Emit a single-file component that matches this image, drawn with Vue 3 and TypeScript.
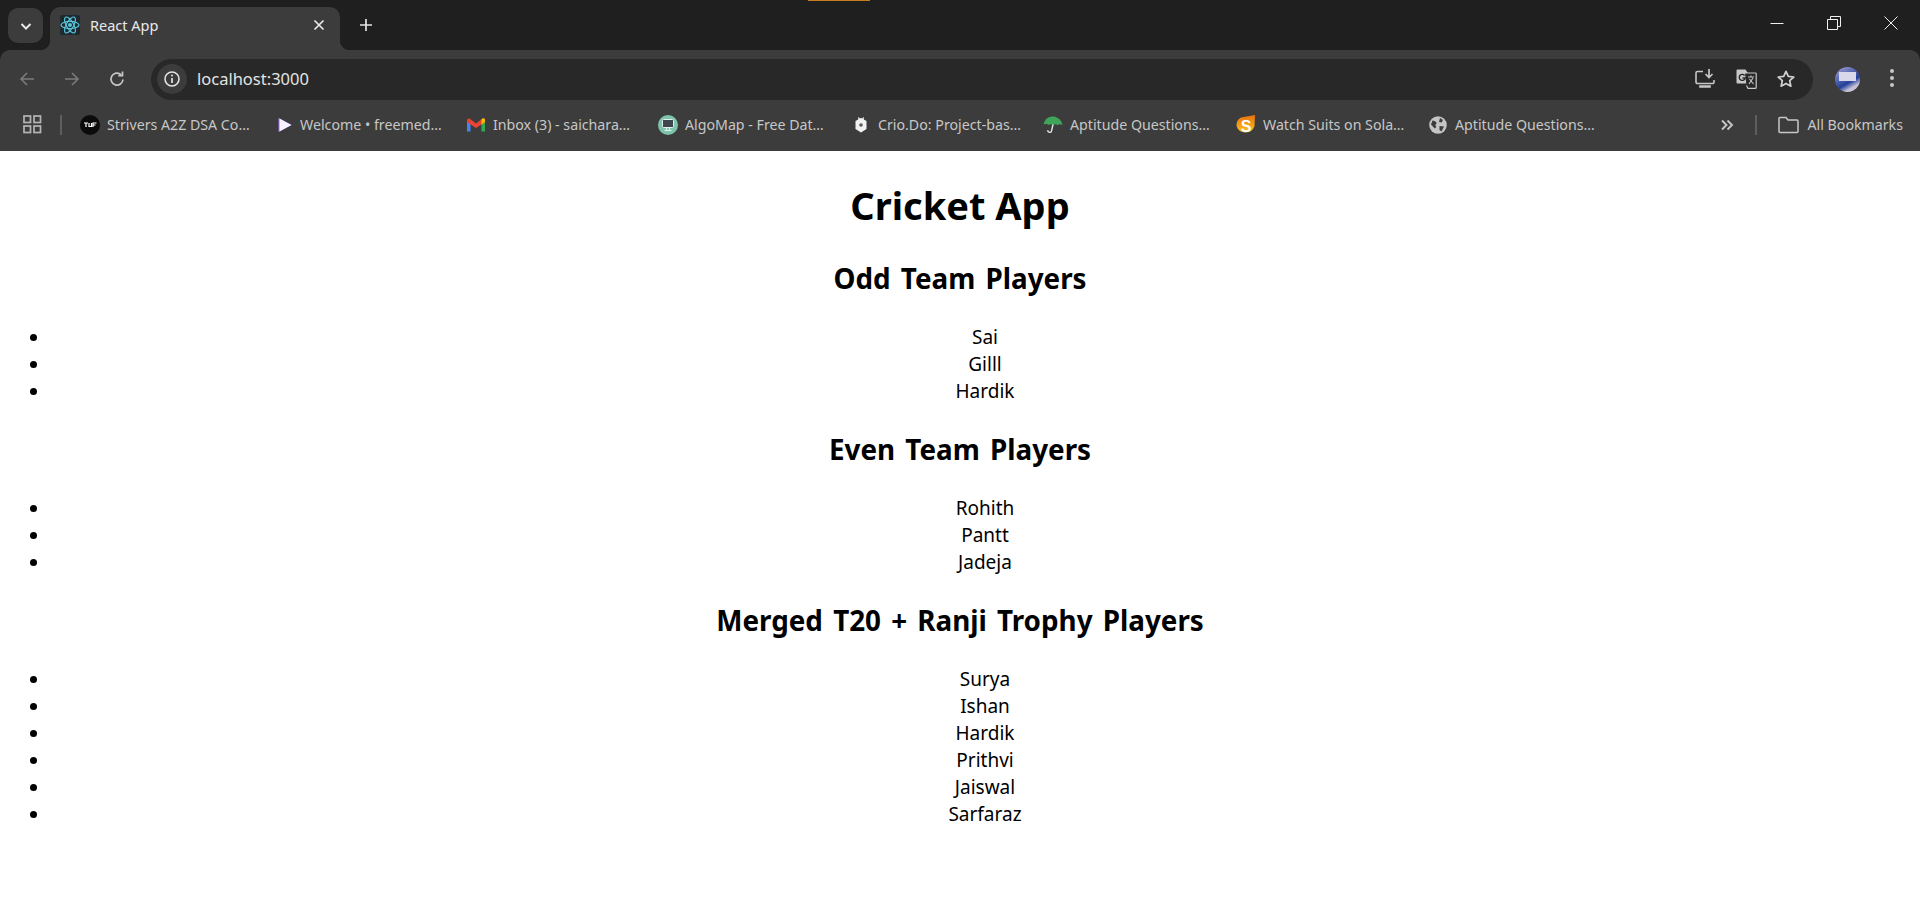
<template>
  <div class="browser">
    <div class="tabstrip">
      <div class="stripe" />
      <button class="tab-search">
        <svg width="14" height="14" viewBox="0 0 14 14"><path d="M2.5 5l4.5 4.5L11.500 5" fill="none" stroke="#e8e8e8" stroke-width="2" /></svg>
      </button>
      <div class="tab">
        <svg class="favicon" width="20" height="20" viewBox="0 0 20 20">
          <rect width="20" height="20" rx="2" fill="#1d2a30" />
          <g fill="none" stroke="#58c4dc" stroke-width="1.200">
            <ellipse cx="10" cy="10" rx="9" ry="3.600" />
            <ellipse cx="10" cy="10" rx="9" ry="3.600" transform="rotate(60 10 10)" />
            <ellipse cx="10" cy="10" rx="9" ry="3.600" transform="rotate(120 10 10)" />
          </g>
          <circle cx="10" cy="10" r="2" fill="#58c4dc" />
        </svg>
        <span class="tab-title">React App</span>
        <svg class="tab-close" width="12" height="12" viewBox="0 0 12 12"><path d="M1.500 1.500l9 9M10.500 1.500l-9 9" stroke="#e8e8e8" stroke-width="1.700" /></svg>
      </div>
      <svg class="new-tab" width="14" height="14" viewBox="0 0 14 14"><path d="M7 1v12M1 7h12" stroke="#e3e3e3" stroke-width="1.700" /></svg>
      <div class="window-btns">
        <svg width="14" height="14" viewBox="0 0 14 14"><path d="M0.500 7.500h13" stroke="#f0f0f0" stroke-width="1" /></svg>
        <svg width="14" height="14" viewBox="0 0 14 14"><path d="M0.500 3.500h10v10h-10zM3.500 3.500v-3h10v10h-3" fill="none" stroke="#f0f0f0" stroke-width="1" /></svg>
        <svg width="14" height="14" viewBox="0 0 14 14"><path d="M0.500 0.500l13 13M13.500 0.500l-13 13" stroke="#f0f0f0" stroke-width="1" /></svg>
      </div>
    </div>

    <div class="toolbar">
      <svg class="nav" width="18" height="18" viewBox="0 0 18 18"><path d="M16 9H3M9 3L3 9l6 6" fill="none" stroke="#7b7b7b" stroke-width="1.600" /></svg>
      <svg class="nav" width="18" height="18" viewBox="0 0 18 18"><path d="M2 9h13M9 3l6 6-6 6" fill="none" stroke="#7b7b7b" stroke-width="1.600" /></svg>
      <svg class="nav" width="18" height="18" viewBox="0 0 18 18"><path d="M15 9.500A6 6 0 1 1 13 4.600M14.500 1.500v4.200h-4.200" fill="none" stroke="#c7c7c7" stroke-width="1.700" /></svg>
      <div class="omnibox">
        <span class="site-info">
          <svg width="18" height="18" viewBox="0 0 18 18">
            <circle cx="9" cy="9" r="7" fill="none" stroke="#e3e3e3" stroke-width="1.600" />
            <path d="M9 8v5" stroke="#e3e3e3" stroke-width="1.700" />
            <circle cx="9" cy="5.600" r="1" fill="#e3e3e3" />
          </svg>
        </span>
        <span class="url">localhost:3000</span>
        <div class="omni-actions">
          <svg width="22" height="22" viewBox="0 0 22 22">
            <path d="M9 3.500H3.500a1.500 1.500 0 0 0-1.500 1.500v9a1.500 1.500 0 0 0 1.500 1.500h15a1.500 1.500 0 0 0 1.500-1.500V12M6 19h10v-1H6z" fill="none" stroke="#c7c7c7" stroke-width="1.600" />
            <path d="M15 1v8M11.500 6l3.500 3.500L18.500 6" fill="none" stroke="#c7c7c7" stroke-width="1.700" />
          </svg>
          <svg width="22" height="22" viewBox="0 0 22 22">
            <path d="M1.500 2.500a1 1 0 0 1 1-1h8l2 3v11h-10a1 1 0 0 1-1-1z" fill="#c7c7c7" />
            <path d="M10 5h10.500a.7.7 0 0 1 .7.7v14a.7.7 0 0 1-.7.7H13l-1.500-3" fill="#282828" stroke="#c7c7c7" stroke-width="1.200" />
            <path d="M9.600 7.500a3 3 0 1 0 .6 2.500H7.500" fill="none" stroke="#282828" stroke-width="1.400" />
            <path d="M13 9h6M16 7.500V9M14 16l4-6M14.500 11l4 5" fill="none" stroke="#c7c7c7" stroke-width="1.100" />
          </svg>
          <svg width="20" height="20" viewBox="0 0 20 20"><path d="M10 2.300l2.300 5.100 5.500.6-4.100 3.700 1.200 5.500L10 14.400l-4.900 2.800 1.200-5.500L2.200 8l5.500-.6z" fill="none" stroke="#d0d0d0" stroke-width="1.700" stroke-linejoin="round" /></svg>
        </div>
      </div>
      <span class="avatar"><span class="avatar-card" /></span>
      <svg class="menu" width="6" height="20" viewBox="0 0 6 20"><circle cx="3" cy="3" r="2" fill="#c7c7c7" /><circle cx="3" cy="10" r="2" fill="#c7c7c7" /><circle cx="3" cy="17" r="2" fill="#c7c7c7" /></svg>
    </div>

    <div class="bookmarks">
      <svg class="apps" width="19" height="19" viewBox="0 0 19 19">
        <g fill="none" stroke="#b5b5b5" stroke-width="1.700">
          <rect x="1" y="1" width="6.500" height="6.500" /><rect x="11" y="1" width="6.500" height="6.500" />
          <rect x="1" y="11" width="6.500" height="6.500" /><rect x="11" y="11" width="6.500" height="6.500" />
        </g>
      </svg>
      <span class="divider" />
      <div v-for="b in bookmarks" :key="b.icon" class="bookmark" :style="{ width: b.width + 'px' }">
        <svg width="20" height="20" viewBox="0 0 20 20" class="bm-icon">
          <template v-if="b.icon === 'tuf'">
            <circle cx="10" cy="10" r="10" fill="#0b0b0b" />
            <path d="M4 8h4M6 8v4M9 8v3.500h2.500V8M13 12V8h3.500M13 10h2.500" fill="none" stroke="#fff" stroke-width="1.200" />
          </template>
          <g v-else-if="b.icon === 'play'" transform="translate(2 0)">
            <path d="M3.500 3l13 7-13 7z" fill="#9a6cf0" />
            <path d="M4.500 3.500l12 6.500-12 6.500z" fill="#f7f2ff" />
          </g>
          <template v-else-if="b.icon === 'gmail'">
            <path d="M1 5.500V16.500h3.500V9z" fill="#4285f4" />
            <path d="M19 5.500V16.500h-3.500V9z" fill="#34a853" />
            <path d="M1 5.500a2 2 0 0 1 3.200-1.600L10 8.500l5.800-4.600A2 2 0 0 1 19 5.500V7l-3.500 2.500L10 13 4.500 9.500 1 7z" fill="#ea4335" />
            <path d="M15.500 4.200l1.500-1A2 2 0 0 1 19 5.500V7l-3.500 2.500z" fill="#fbbc04" />
          </template>
          <template v-else-if="b.icon === 'algo'">
            <circle cx="10" cy="10" r="10" fill="#7dc4ad" />
            <rect x="4.500" y="4.500" width="11" height="8" rx=".8" fill="#3f4650" stroke="#e4efec" stroke-width="1" />
            <path d="M8.500 13v1.800M11.500 13v1.800M6.500 15.500h7" stroke="#e4efec" stroke-width="1.200" />
          </template>
          <template v-else-if="b.icon === 'crio'">
            <path d="M10 3l5.500 3v8L10 17.500 4.500 14V6z" fill="#f2f2f2" />
            <path d="M7.500 1.800l1.500 2h2l1.500-2 .5 3h-6z" fill="#f2f2f2" />
            <circle cx="10" cy="10" r="1.800" fill="#5a5a5a" />
          </template>
          <template v-else-if="b.icon === 'umbrella'">
            <path d="M0.500 9.500C1.500 4 6 1 10.500 1.500c4.500.5 8.500 3.800 9 8.700-1.500-1.200-3.300-1.200-4.800 0-1.300-1.200-3-1.200-4.200 0-1.300-1.200-3.500-1.500-4.800-.3-1.500-1-3.200-1.200-5.200-.4z" fill="#3fa35a" />
            <path d="M10 9.500l-1.500 6.500a1.900 1.900 0 0 1-3.700-.8" fill="none" stroke="#dfe8df" stroke-width="1.400" />
          </template>
          <template v-else-if="b.icon === 'sola'">
            <defs>
              <linearGradient id="sola-grad" x1="0" y1="0" x2="0" y2="1">
                <stop offset="0" stop-color="#e96f10" />
                <stop offset="1" stop-color="#fbc21e" />
              </linearGradient>
            </defs>
            <path d="M5 2.500L19 0l-.5 11A9.500 9.500 0 0 1 0.500 11a9 9 0 0 1 4.500-8.500z" fill="url(#sola-grad)" />
            <text x="10" y="16.500" text-anchor="middle" class="sola-s">S</text>
          </template>
          <template v-else>
            <circle cx="10" cy="10" r="8.800" fill="#c4c4c4" />
            <path d="M4.500 5.500c2 .2 3.300 1 4.300 2.500l-1.500 2 1 2-1.500 1.500L3 9.500zM12 3l3 2-1.500 2.500-2.500-.5zM11.500 11l4.500.5-2.500 5-2-1.500z" fill="#3c3c3c" />
          </template>
        </svg>
        <span class="bm-label">{{ b.label }}</span>
      </div>
      <div class="bm-right">
        <svg width="16" height="16" viewBox="0 0 16 16"><path d="M3 3.500l4.500 4.500L3 12.500M8.500 3.500L13 8l-4.500 4.500" fill="none" stroke="#c7c7c7" stroke-width="1.900" /></svg>
        <span class="divider narrow" />
        <svg width="21" height="18" viewBox="0 0 21 18"><path d="M1 2.500a1 1 0 0 1 1-1h6l2 2.500h9a1 1 0 0 1 1 1V15.500a1 1 0 0 1-1 1H2a1 1 0 0 1-1-1z" fill="none" stroke="#c7c7c7" stroke-width="1.500" /></svg>
        <span class="bm-label all">All Bookmarks</span>
      </div>
    </div>
  </div>

  <main class="page">
    <h1>Cricket App</h1>
    <template v-for="team in teams" :key="team.title">
      <h2>{{ team.title }}</h2>
      <ul>
        <li v-for="p in team.players" :key="p">{{ p }}</li>
      </ul>
    </template>
  </main>
</template>

<script setup lang="ts">
const bookmarks = [
  { icon: 'tuf', label: 'Strivers A2Z DSA Co…', width: 193 },
  { icon: 'play', label: 'Welcome • freemed…', width: 193 },
  { icon: 'gmail', label: 'Inbox (3) - saichara…', width: 192 },
  { icon: 'algo', label: 'AlgoMap - Free Dat…', width: 193 },
  { icon: 'crio', label: 'Crio.Do: Project-bas…', width: 192 },
  { icon: 'umbrella', label: 'Aptitude Questions…', width: 193 },
  { icon: 'sola', label: 'Watch Suits on Sola…', width: 192 },
  { icon: 'globe', label: 'Aptitude Questions…', width: 170 },
]

const teams = [
  { title: 'Odd Team Players', players: ['Sai', 'Gilll', 'Hardik'] },
  { title: 'Even Team Players', players: ['Rohith', 'Pantt', 'Jadeja'] },
  {
    title: 'Merged T20 + Ranji Trophy Players',
    players: ['Surya', 'Ishan', 'Hardik', 'Prithvi', 'Jaiswal', 'Sarfaraz'],
  },
]
</script>

<style>
html,
body {
  margin: 0;
  background: #fff;
}
</style>

<style scoped>
.browser {
  background: #1f1f1f;
  font-family: "Noto Sans", "Open Sans", sans-serif;
}

.tabstrip {
  position: relative;
  display: flex;
  align-items: flex-start;
  height: 50px;
  padding: 7px 0 0 8px;
  box-sizing: border-box;
}

.stripe {
  position: absolute;
  top: 0;
  left: 808px;
  width: 62px;
  height: 1px;
  background: #c77d1e;
}

.tab-search {
  width: 35px;
  height: 35px;
  margin-top: 1px;
  border: 0;
  padding: 0;
  border-radius: 10px;
  background: #3c3c3c;
  display: flex;
  align-items: center;
  justify-content: center;
}

.tab {
  position: relative;
  width: 290px;
  height: 43px;
  margin-left: 7px;
  padding: 0 12px 7px 10px;
  box-sizing: border-box;
  background: #3c3c3c;
  border-radius: 10px 10px 0 0;
  display: flex;
  align-items: center;
  color: #e8e8e8;
}

.tab::before,
.tab::after {
  content: "";
  position: absolute;
  bottom: 0;
  width: 10px;
  height: 10px;
}

.tab::before {
  left: -10px;
  background: radial-gradient(circle at 0 0, transparent 10px, #3c3c3c 10.5px);
}

.tab::after {
  right: -10px;
  background: radial-gradient(circle at 100% 0, transparent 10px, #3c3c3c 10.5px);
}

.favicon {
  flex: none;
}

.tab-title {
  margin-left: 10px;
  font-size: 14.5px;
  flex: 1;
}

.tab-close {
  margin-right: 3px;
}

.new-tab {
  margin: 11px 0 0 19px;
}

.window-btns {
  display: flex;
  gap: 43px;
  margin: 9px 22px 0 auto;
}

.toolbar {
  height: 50px;
  background: #3c3c3c;
  border-radius: 10px 10px 0 0;
  display: flex;
  align-items: center;
  padding: 0 25px 0 18px;
  box-sizing: border-box;
}

.nav {
  flex: none;
  margin: 8px 27px 0 0;
}

.omnibox {
  flex: 1;
  height: 41px;
  margin: 8px 0 0 -2px;
  border-radius: 21px;
  background: #282828;
  display: flex;
  align-items: center;
  padding: 0 14px 0 6px;
  box-sizing: border-box;
}

.site-info {
  width: 30px;
  height: 30px;
  border-radius: 50%;
  background: #3c3c3c;
  display: flex;
  align-items: center;
  justify-content: center;
}

.url {
  margin: 0 0 2px 10px;
  font-size: 16.5px;
  color: #e3e3e3;
}

.omni-actions {
  margin-left: auto;
  display: flex;
  align-items: center;
  gap: 19px;
  padding-right: 3px;
}

.avatar {
  position: relative;
  flex: none;
  width: 25px;
  height: 25px;
  margin: 8px 0 0 22px;
  border-radius: 50%;
  overflow: hidden;
  background: linear-gradient(150deg, #a9a6d8 0%, #24409a 60%, #c7c4d8 78%);
}

.avatar-card {
  position: absolute;
  left: 4px;
  top: 5px;
  width: 17px;
  height: 9px;
  background: #d8d8ea;
}

.menu {
  flex: none;
  margin: 6px 0 0 29px;
}

.bookmarks {
  height: 51px;
  padding: 0 0 2px 23px;
  background: #3c3c3c;
  display: flex;
  align-items: center;
  box-sizing: border-box;
  color: #c7c7c7;
}

.apps {
  flex: none;
}

.divider {
  width: 2px;
  height: 20px;
  margin: 0 18px;
  background: #5e5e5e;
}

.bookmark {
  flex: none;
  display: flex;
  align-items: center;
}

.bm-icon {
  flex: none;
}

.bm-label {
  margin-left: 7px;
  font-size: 14.2px;
  white-space: nowrap;
}

.sola-s {
  font-family: "Liberation Sans", sans-serif;
  font-size: 16px;
  font-weight: 700;
  fill: #fff;
}

.bm-right {
  margin-left: auto;
  display: flex;
  align-items: center;
  padding-right: 17px;
}

.divider.narrow {
  margin: 0 21px 0 20px;
}

.bm-right .all {
  margin-left: 9px;
}

.page {
  font-family: "Noto Sans", "Open Sans", sans-serif;
  color: #000;
  text-align: center;
  overflow: hidden;
}

h1 {
  margin: 28px 0 26.8px;
  font-size: 38px;
  line-height: 53.2px;
  font-weight: 700;
}

h2 {
  margin: 24.9px 0;
  font-size: 27.8px;
  line-height: 39.9px;
  font-weight: 700;
  word-spacing: 3px;
}

ul {
  margin: 25px 0;
  padding: 0 0 0 50px;
}

li {
  font-size: 19px;
  line-height: 27px;
}
</style>
